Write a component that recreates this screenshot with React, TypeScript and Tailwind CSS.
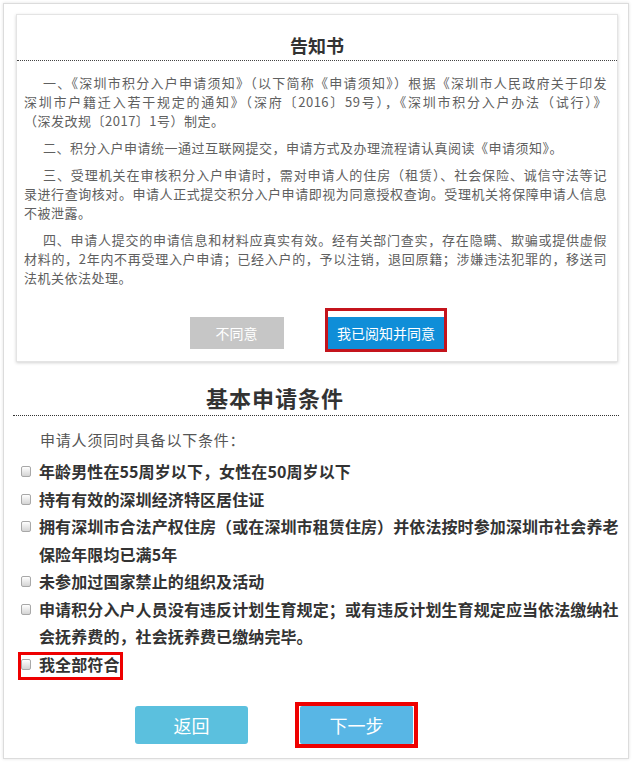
import React from "react";

const FONT = "font-['Noto_Sans_CJK_SC','Microsoft_YaHei',sans-serif]";

function JLine({ children, indent = false }: { children: React.ReactNode; indent?: boolean }) {
  return (
    <div className={`text-justify [text-align-last:justify] ${indent ? "indent-[19px]" : ""}`}>{children}</div>
  );
}
function PLine({ children, indent = false }: { children: React.ReactNode; indent?: boolean }) {
  return <div className={indent ? "indent-[19px]" : ""}>{children}</div>;
}

function Checkbox() {
  return (
    <div className="mt-[8px] h-[11px] w-[10px] shrink-0 rounded-[2px] border border-[#a8a8a8] bg-linear-to-b from-white to-[#d4d4d4]" />
  );
}

function Item({ children }: { children: React.ReactNode }) {
  return (
    <div className="flex gap-[8px]">
      <Checkbox />
      <div>{children}</div>
    </div>
  );
}

export default function App() {
  return (
    <div className={`w-[633px] h-[764px] bg-white pt-[3px] ${FONT}`}>
      <div className="ml-[3px] h-[756px] w-[626px] border border-[#dcdcdc] shadow-[0_0_3px_rgba(0,0,0,0.12)]">
        {/* Notice card */}
        <div className="ml-[12px] mt-[10px] w-[602px] border border-[#e4e4e4] shadow-[0_1px_3px_rgba(0,0,0,0.18)]">
          <div className="h-[46px] border-b border-dotted border-[#444] pt-[18px] text-center">
            <span className="text-[18px] font-bold leading-[24px] text-[#333]">告知书</span>
          </div>
          <div className="pl-[7px] pr-[10px] pt-[12px] text-[13px] leading-[19px] tracking-[0.5px] text-[#606060]">
            <div>
              <JLine indent>一、《深圳市积分入户申请须知》（以下简称《申请须知》）根据《深圳市人民政府关于印发</JLine>
              <JLine>深圳市户籍迁入若干规定的通知》（深府〔2016〕59号），《深圳市积分入户办法（试行）》</JLine>
              <PLine>（深发改规〔2017〕1号）制定。</PLine>
            </div>
            <div className="mt-[8px]">
              <PLine indent>二、积分入户申请统一通过互联网提交，申请方式及办理流程请认真阅读《申请须知》。</PLine>
            </div>
            <div className="mt-[8px]">
              <JLine indent>三、受理机关在审核积分入户申请时，需对申请人的住房（租赁）、社会保险、诚信守法等记</JLine>
              <JLine>录进行查询核对。申请人正式提交积分入户申请即视为同意授权查询。受理机关将保障申请人信息</JLine>
              <PLine>不被泄露。</PLine>
            </div>
            <div className="mt-[8px]">
              <JLine indent>四、申请人提交的申请信息和材料应真实有效。经有关部门查实，存在隐瞒、欺骗或提供虚假</JLine>
              <JLine>材料的，2年内不再受理入户申请；已经入户的，予以注销，退回原籍；涉嫌违法犯罪的，移送司</JLine>
              <PLine>法机关依法处理。</PLine>
            </div>
          </div>
          <div className="mt-[30px] mb-[12px] flex justify-center gap-[44px]">
            <div className="flex h-[32px] w-[94px] items-center justify-center bg-[#c6c6c6] text-[14px] text-white">
              不同意
            </div>
            <div className="relative">
              <div className="flex h-[32px] w-[117px] items-center justify-center bg-[#0f8ed8] text-[14px] text-white">
                我已阅知并同意
              </div>
              <div className="absolute -left-[3px] -right-[2px] -top-[9px] -bottom-[3px] border-[3px] border-[#c4141c]" />
            </div>
          </div>
        </div>

        {/* Basic conditions */}
        <div className="mx-[9px] mt-[20px] border-b border-dotted border-[#333] pb-[3px]">
          <div className="pl-[193px] text-[22px] font-bold leading-[30px] tracking-[1px] text-[#333]">基本申请条件</div>
        </div>
        <div className="pl-[36px] pt-[12px] text-[15px] leading-[24px] tracking-[0.8px] text-[#555]">
          申请人须同时具备以下条件：
        </div>
        <div className="mt-[6px] pl-[17px] text-[16px] font-bold leading-[27.5px] tracking-[0.1px] text-[#333]">
          <Item>年龄男性在55周岁以下，女性在50周岁以下</Item>
          <Item>持有有效的深圳经济特区居住证</Item>
          <Item>
            拥有深圳市合法产权住房（或在深圳市租赁住房）并依法按时参加深圳市社会养老
            <br />
            保险年限均已满5年
          </Item>
          <Item>未参加过国家禁止的组织及活动</Item>
          <Item>
            申请积分入户人员没有违反计划生育规定；或有违反计划生育规定应当依法缴纳社
            <br />
            会抚养费的，社会抚养费已缴纳完毕。
          </Item>
          <div className="relative">
            <Item>我全部符合</Item>
            <div className="absolute -left-[3px] top-[1px] h-[28px] w-[105px] border-[3px] border-[#ee0000]" />
          </div>
        </div>
        <div className="mt-[28px] flex gap-[52px] pl-[131px]">
          <div className="flex h-[38px] w-[113px] items-center justify-center rounded-[3px] bg-[#5bc0de] text-[18px] text-white">
            返回
          </div>
          <div className="relative">
            <div className="flex h-[38px] w-[113px] items-center justify-center rounded-[2px] bg-[#58b6e5] text-[18px] text-white">
              下一步
            </div>
            <div className="absolute -left-[5px] -right-[5px] -top-[4px] -bottom-[4px] border-[4px] border-[#ee0000]" />
          </div>
        </div>
      </div>
    </div>
  );
}
